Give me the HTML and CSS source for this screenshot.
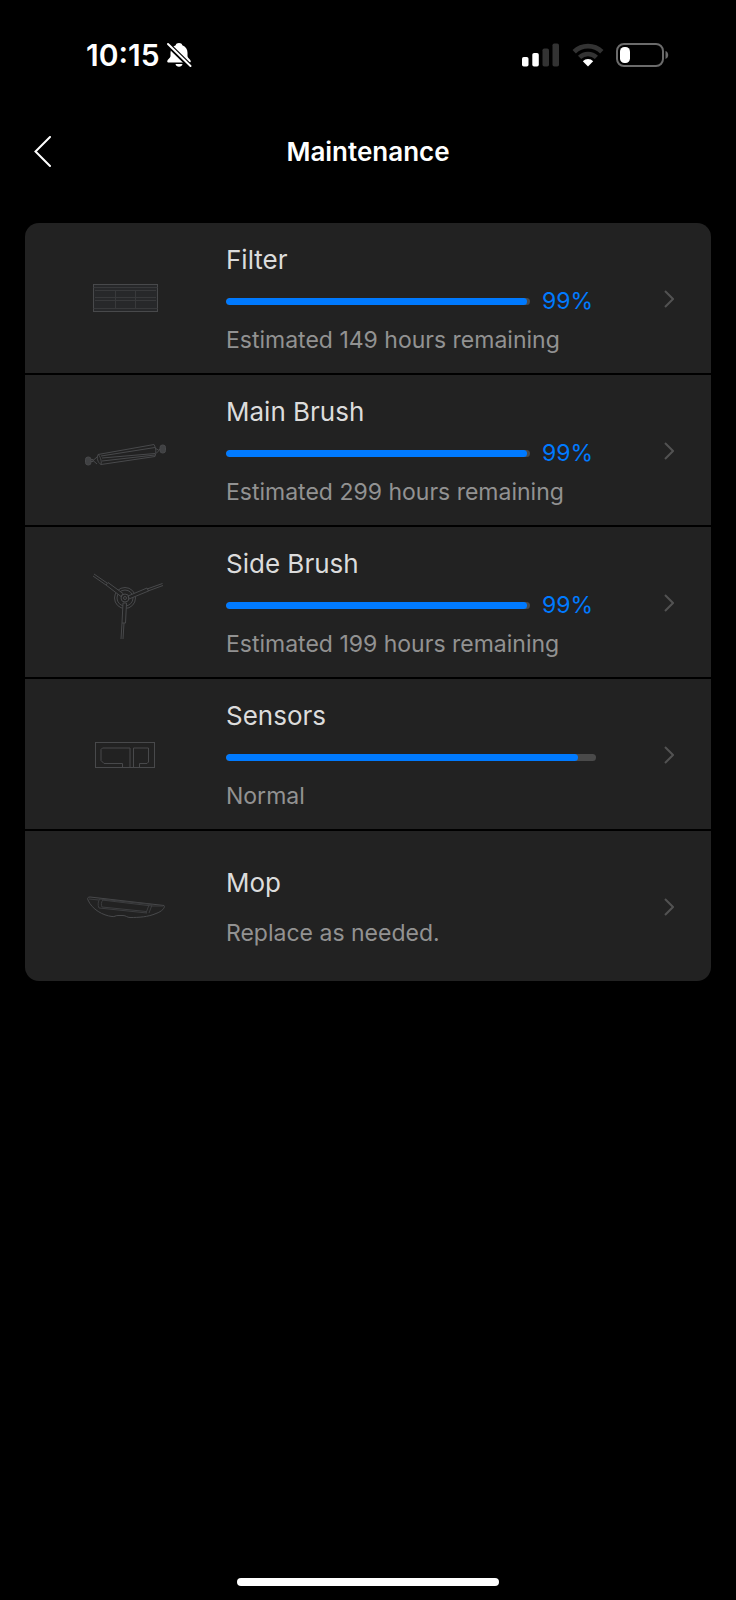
FILE: index.html
```html
<!DOCTYPE html>
<html lang="en">
<head>
    <meta charset="UTF-8">
    <meta name="viewport" content="width=device-width, initial-scale=1.0">
    <title>Maintenance</title>
    <link rel="stylesheet" href="styles.css">
</head>
<body>
    <div class="status-bar">
        <div class="status-left">
            <span class="time">10:15</span>
            <svg class="bell" width="26" height="26" viewBox="0 0 26 26" aria-hidden="true">
                <path d="M13 1c-1.800 0-3 .9-3.300 2.200C6.200 4.400 4.500 7.300 4.500 10.800v3.400c0 1.700-3.300 3.500-3.300 5 0 .9.700 1.300 1.500 1.300h20.600c.8 0 1.500-.4 1.500-1.300 0-1.500-3.300-3.300-3.300-5v-3.400c0-3.500-1.700-6.400-5.200-7.600C16 1.900 14.800 1 13 1z" fill="#fff"/>
                <path d="M9.500 22h7c-.4 1.700-1.700 2.800-3.500 2.800S9.900 23.700 9.500 22z" fill="#fff"/>
                <path d="M1 1.500l23.500 23" stroke="#000" stroke-width="5"/>
                <path d="M2 2l22.500 22" stroke="#fff" stroke-width="2" stroke-linecap="round"/>
            </svg>
        </div>
        <div class="status-right">
            <svg width="38" height="24" viewBox="0 0 38 24" aria-hidden="true">
                <rect x="0" y="14" width="6.500" height="9.500" rx="1.800" fill="#fff"/>
                <rect x="10.300" y="10" width="6.500" height="13.500" rx="1.800" fill="#fff"/>
                <rect x="20.500" y="5.500" width="6.500" height="18" rx="1.800" fill="#333"/>
                <rect x="30.500" y=".5" width="6.500" height="23" rx="1.800" fill="#333"/>
            </svg>
            <svg width="32" height="24" viewBox="0 0 32 24" aria-hidden="true">
                <path d="M2.200 8.800a19.800 19.800 0 0 1 27.600 0" fill="none" stroke="#333" stroke-width="4.800"/>
                <path d="M7.600 14.300a12.200 12.200 0 0 1 16.800 0" fill="none" stroke="#333" stroke-width="4.600"/>
                <path d="M16 23.500l-5.200-5.300a7.500 7.500 0 0 1 10.400 0z" fill="#fff"/>
            </svg>
            <svg width="53" height="24" viewBox="0 0 53 24" aria-hidden="true">
                <rect x="1" y="1" width="46" height="22" rx="7" fill="none" stroke="#6b6b6b" stroke-width="2"/>
                <rect x="4" y="4" width="10" height="16" rx="4.500" fill="#fff"/>
                <path d="M49.500 8c1.700.6 2.700 2.200 2.700 4s-1 3.400-2.700 4z" fill="#6b6b6b"/>
            </svg>
        </div>
    </div>

    <header class="header">
        <button class="back-button" type="button" aria-label="Back">
            <svg width="18" height="32" viewBox="0 0 18 32" aria-hidden="true">
                <path d="M16 1L1.500 15.500 16 30" fill="none" stroke="#fff" stroke-width="2" stroke-linecap="round"/>
            </svg>
        </button>
        <h1>Maintenance</h1>
    </header>

    <main class="card">
        <a class="row" href="#filter">
            <svg class="part" width="100" height="80" viewBox="0 0 100 80" aria-hidden="true">
                <rect x="18.500" y="25.500" width="64" height="27" fill="#27282a"/>
                <path d="M43 38.500h16M43 41.500h16"/>
                <path d="M18.500 28.500h64M20 31.500h61M20 38.500h61M20 41.500h61M18.500 49.500h64M40.500 31v18M60.500 31v18" stroke="#38393b"/>
            </svg>
            <div class="info">
                <span class="name">Filter</span>
                <div class="meter">
                    <div class="track"><div class="fill" style="width: 99%"></div></div>
                    <span class="percent">99%</span>
                </div>
                <span class="detail">Estimated 149 hours remaining</span>
            </div>
            <svg class="arrow" width="10" height="18" viewBox="0 0 10 18" aria-hidden="true"><path d="M1 1l8 8-8 8"/></svg>
        </a>
        <a class="row" href="#main-brush">
            <svg class="part" width="100" height="80" viewBox="0 0 100 80" aria-hidden="true">
                <path d="M23 43.500l56-10c2 3 2.500 8 1 12l-54 8c-3.500-2-4.500-7-3-10zM23 43.500c2 1 4 7 3 10M26 45l54-8.500M27 47l53-4.500M27 50l53-6M22 46l-4 3.500 4 3.500M80 37l4 2.500-3 3"/>
                <rect x="10.500" y="46" width="5.500" height="8" rx="2.500" fill="#404143"/>
                <path d="M16 48.500h2v2h-2M84 38.500h2"/>
                <rect x="85" y="34" width="5.500" height="8" rx="2.500" fill="#404143"/>
            </svg>
            <div class="info">
                <span class="name">Main Brush</span>
                <div class="meter">
                    <div class="track"><div class="fill" style="width: 99%"></div></div>
                    <span class="percent">99%</span>
                </div>
                <span class="detail">Estimated 299 hours remaining</span>
            </div>
            <svg class="arrow" width="10" height="18" viewBox="0 0 10 18" aria-hidden="true"><path d="M1 1l8 8-8 8"/></svg>
        </a>
        <a class="row" href="#side-brush">
            <svg class="part" width="100" height="80" viewBox="0 0 100 80" aria-hidden="true">
                <circle cx="50" cy="35" r="10.500"/>
                <circle cx="50" cy="35" r="8"/>
                <path d="M19 11l13 9M18 13l13 9M87.500 20.500L72 26M88 22.500L73 28M46 76l1-16M48 76l1-16"/>
                <path d="M31 22l2-2.500 15 11-2 3zM72 25l1.500 3L54 36l-1-3zM47 60h3.500l1-20h-3.500z" fill="#222"/>
                <circle cx="50" cy="35" r="4"/>
                <circle cx="50" cy="35" r="1.500"/>
            </svg>
            <div class="info">
                <span class="name">Side Brush</span>
                <div class="meter">
                    <div class="track"><div class="fill" style="width: 99%"></div></div>
                    <span class="percent">99%</span>
                </div>
                <span class="detail">Estimated 199 hours remaining</span>
            </div>
            <svg class="arrow" width="10" height="18" viewBox="0 0 10 18" aria-hidden="true"><path d="M1 1l8 8-8 8"/></svg>
        </a>
        <a class="row" href="#sensors">
            <svg class="part" width="100" height="80" viewBox="0 0 100 80" aria-hidden="true">
                <rect x="20.500" y="27.500" width="59" height="25"/>
                <path d="M47.500 52.500v-4H29l-3-3v-11l1.500-1.500h27.500v19.500M58.500 52.500V33h15v14l-1.500 1.500h-7.500v4"/>
            </svg>
            <div class="info">
                <span class="name">Sensors</span>
                <div class="meter">
                    <div class="track"><div class="fill" style="width: 95%"></div></div>
                </div>
                <span class="detail">Normal</span>
            </div>
            <svg class="arrow" width="10" height="18" viewBox="0 0 10 18" aria-hidden="true"><path d="M1 1l8 8-8 8"/></svg>
        </a>
        <a class="row" href="#mop">
            <svg class="part" width="100" height="80" viewBox="0 0 100 80" aria-hidden="true">
                <path d="M13 33c-1-2 0-3 2-3l74 8.500c1.500 2-2 6-8 8-8 3.500-17 4-26 4-3 0-4-2-7-2h-5c-3 0-3 1.500-6 1-9-1-20-7-24-16.500z"/>
                <path d="M14 32l10 1M27 33l50 6M25 32l52 5.500M27 40l44 4.500M24 41l48 5M25 32c-2 2-2.500 6-1 9M28 33c-2 2-2 5-1 7M74 38l-3 8M77 38l-3 8M77 39h11" stroke="#3c3d3f"/>
            </svg>
            <div class="info info-short">
                <span class="name">Mop</span>
                <span class="detail">Replace as needed.</span>
            </div>
            <svg class="arrow" width="10" height="18" viewBox="0 0 10 18" aria-hidden="true"><path d="M1 1l8 8-8 8"/></svg>
        </a>
    </main>

    <div class="home-indicator"></div>
</body>
</html>
```
FILE: styles.css
```css
:root {
    --background-color: #000;
    --card-bg: #222;
    --primary-color: #007aff;
    --track-color: #4a4a4a;
    --text-color: #dcdcdc;
    --muted-color: #929292;
    --line-color: #48494b;
}
* {
    box-sizing: border-box;
}
body {
    display: flex;
    flex-direction: column;
    min-height: 100vh;
    margin: 0;
    font-family: Inter, "Liberation Sans", sans-serif;
    background-color: var(--background-color);
    color: #fff;
}
svg {
    display: block;
    flex: none;
}
.status-bar {
    display: flex;
    align-items: center;
    justify-content: space-between;
    height: 108px;
    padding: 1px 67px 0 86px;
}
.status-left {
    display: flex;
    align-items: center;
    gap: 6px;
}
.time {
    font-size: 30px;
    font-weight: 600;
    line-height: 32px;
}
.status-right {
    display: flex;
    align-items: center;
    gap: 12px;
}
.header {
    display: grid;
    grid-template-columns: 64px 1fr 64px;
    align-items: center;
    height: 88px;
    padding: 0 20px;
}
.back-button {
    display: flex;
    align-items: center;
    height: 64px;
    padding: 0 14px;
    border: none;
    background: none;
    cursor: pointer;
}
h1 {
    margin: 0;
    font-size: 26px;
    font-weight: 600;
    line-height: 32px;
    text-align: center;
}
.card {
    display: flex;
    flex-direction: column;
    gap: 2px;
    margin: 27px 25px 0;
    border-radius: 14px;
    overflow: hidden;
}
.row {
    display: flex;
    align-items: center;
    min-height: 150px;
    padding: 21px 37px 19px 50px;
    background: var(--card-bg);
    color: var(--text-color);
    text-decoration: none;
}
.part {
    margin-right: 51px;
    fill: none;
    stroke: var(--line-color);
    stroke-width: 1;
}
.info {
    display: flex;
    flex: 1;
    flex-direction: column;
    gap: 18px;
    margin-right: 68px;
}
.info-short {
    gap: 20px;
}
.name {
    font-size: 26px;
    line-height: 32px;
}
.detail {
    font-size: 23px;
    line-height: 28px;
    color: var(--muted-color);
}
.meter {
    display: flex;
    align-items: center;
    gap: 12px;
    height: 14px;
}
.track {
    flex: 1;
    height: 7px;
    border-radius: 4px;
    background: var(--track-color);
    overflow: hidden;
}
.fill {
    height: 100%;
    border-radius: 4px;
    background: var(--primary-color);
}
.percent {
    padding-right: 3px;
    font-size: 23px;
    line-height: 14px;
    color: var(--primary-color);
}
.arrow {
    fill: none;
    stroke: #525252;
    stroke-width: 2;
}
.home-indicator {
    width: 262px;
    height: 8px;
    margin: auto auto 14px;
    border-radius: 4px;
    background: #fff;
}
```
